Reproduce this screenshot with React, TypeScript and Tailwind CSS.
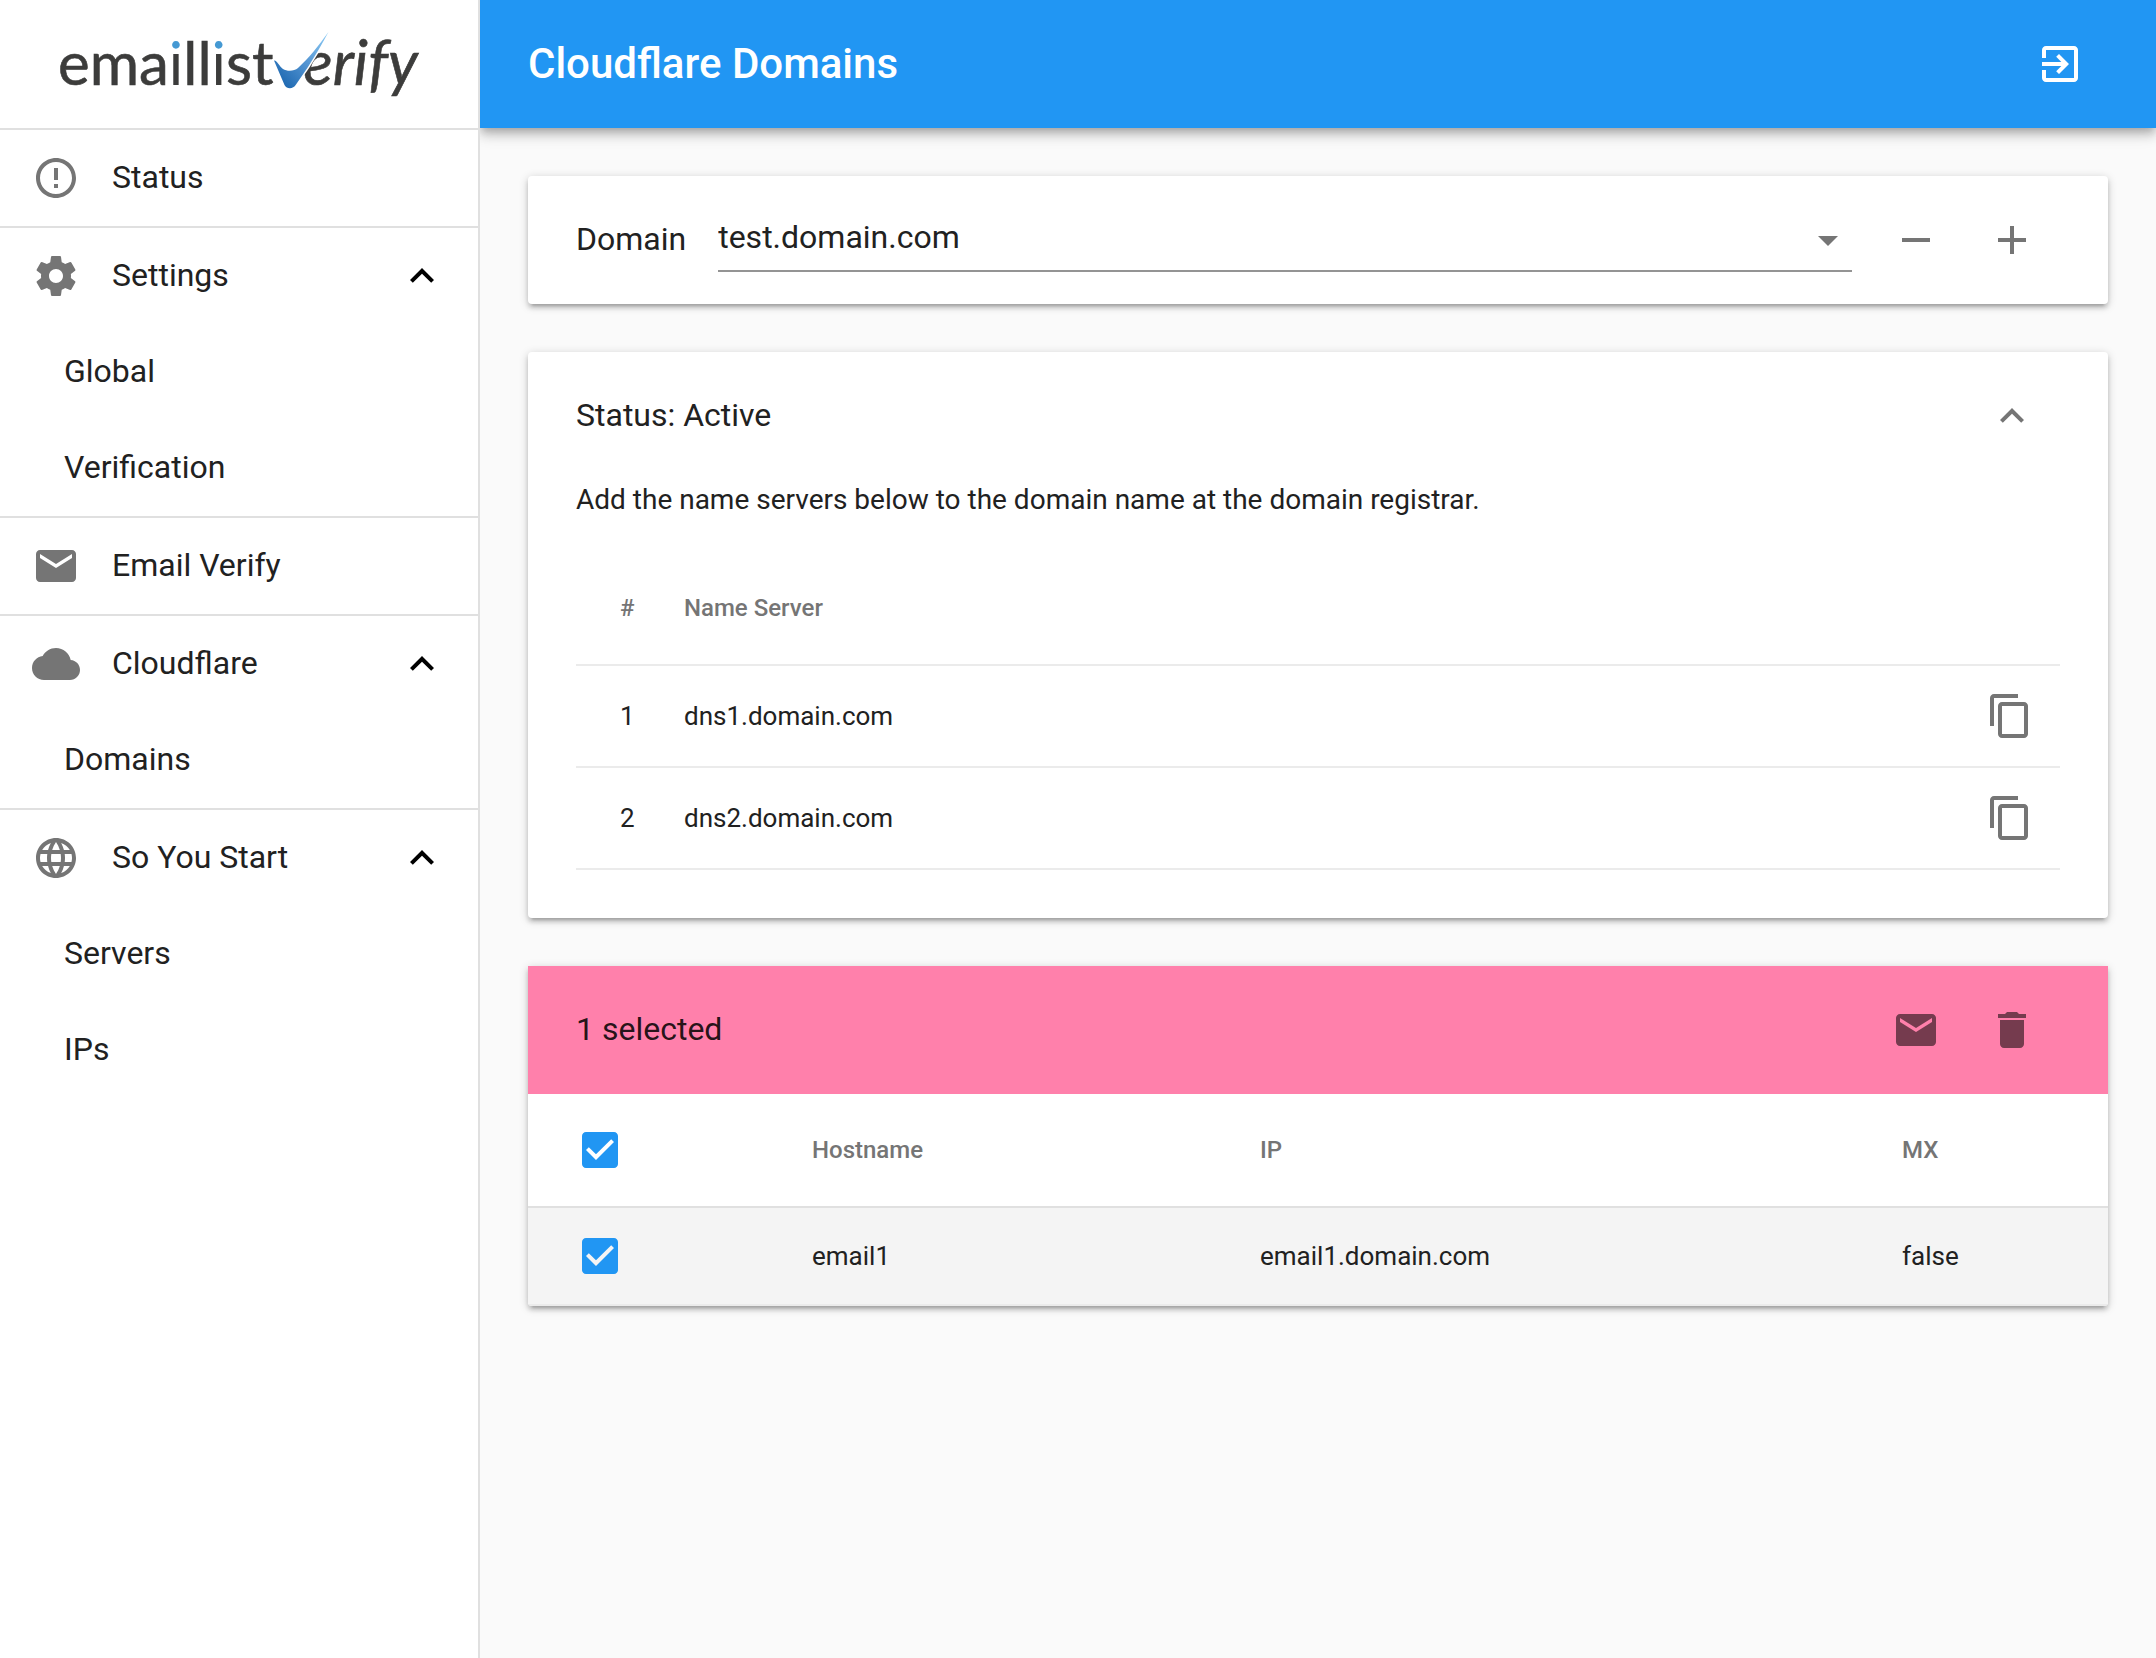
import { useState, type ReactNode } from 'react';

const ICONS = {
  error:
    'M11 15h2v2h-2zm0-8h2v6h-2zm.99-5C6.47 2 2 6.48 2 12s4.47 10 9.99 10C17.52 22 22 17.52 22 12S17.52 2 11.99 2zM12 20c-4.42 0-8-3.58-8-8s3.58-8 8-8 8 3.58 8 8-3.58 8-8 8z',
  settings:
    'M19.43 12.98c.04-.32.07-.64.07-.98s-.03-.66-.07-.98l2.11-1.65c.19-.15.24-.42.12-.64l-2-3.46c-.12-.22-.39-.3-.61-.22l-2.49 1c-.52-.4-1.08-.73-1.69-.98l-.38-2.65C14.46 2.18 14.25 2 14 2h-4c-.25 0-.46.18-.49.42l-.38 2.65c-.61.25-1.17.59-1.69.98l-2.49-1c-.23-.09-.49 0-.61.22l-2 3.46c-.13.22-.07.49.12.64l2.11 1.65c-.04.32-.07.65-.07.98s.03.66.07.98l-2.11 1.65c-.19.15-.24.42-.12.64l2 3.46c.12.22.39.3.61.22l2.49-1c.52.4 1.08.73 1.69.98l.38 2.65c.03.24.24.42.49.42h4c.25 0 .46-.18.49-.42l.38-2.65c.61-.25 1.17-.59 1.69-.98l2.49 1c.23.09.49 0 .61-.22l2-3.46c.12-.22.07-.49-.12-.64l-2.11-1.65zM12 15.5c-1.93 0-3.5-1.57-3.5-3.5s1.57-3.5 3.5-3.5 3.5 1.57 3.5 3.5-1.57 3.5-3.5 3.5z',
  mail: 'M20 4H4c-1.1 0-1.99.9-1.99 2L2 18c0 1.1.9 2 2 2h16c1.1 0 2-.9 2-2V6c0-1.1-.9-2-2-2zm0 4l-8 5-8-5V6l8 5 8-5v2z',
  cloud:
    'M19.35 10.04C18.67 6.59 15.64 4 12 4 9.11 4 6.6 5.64 5.35 8.04 2.34 8.36 0 10.91 0 14c0 3.31 2.69 6 6 6h13c2.76 0 5-2.24 5-5 0-2.64-2.05-4.78-4.65-4.96z',
  globe:
    'M11.99 2C6.47 2 2 6.48 2 12s4.47 10 9.99 10C17.52 22 22 17.52 22 12S17.52 2 11.99 2zm6.93 6h-2.95c-.32-1.25-.78-2.45-1.38-3.56 1.84.63 3.37 1.91 4.33 3.56zM12 4.04c.83 1.2 1.48 2.53 1.91 3.96h-3.82c.43-1.43 1.08-2.76 1.91-3.96zM4.26 14C4.1 13.36 4 12.69 4 12s.1-1.36.26-2h3.38c-.08.66-.14 1.32-.14 2 0 .68.06 1.34.14 2H4.26zm.82 2h2.95c.32 1.25.78 2.45 1.38 3.56-1.84-.63-3.37-1.9-4.33-3.56zm2.95-8H5.08c.96-1.66 2.49-2.93 4.33-3.56C8.81 5.55 8.35 6.75 8.03 8zM12 19.96c-.83-1.2-1.48-2.53-1.91-3.96h3.82c-.43 1.43-1.08 2.76-1.91 3.96zM14.34 14H9.66c-.09-.66-.16-1.32-.16-2 0-.68.07-1.35.16-2h4.68c.09.65.16 1.32.16 2 0 .68-.07 1.34-.16 2zm.25 5.56c.6-1.11 1.06-2.31 1.38-3.56h2.95c-.96 1.65-2.49 2.93-4.33 3.56zM16.36 14c.08-.66.14-1.32.14-2 0-.68-.06-1.34-.14-2h3.38c.16.64.26 1.31.26 2s-.1 1.36-.26 2h-3.38z',
  less: 'M12 8l-6 6 1.41 1.41L12 10.83l4.59 4.58L18 14z',
  exit: 'M10.09 15.59L11.5 17l5-5-5-5-1.41 1.41L12.67 11H3v2h9.67l-2.58 2.59zM19 3H5c-1.11 0-2 .9-2 2v4h2V5h14v14H5v-4H3v4c0 1.1.89 2 2 2h14c1.1 0 2-.9 2-2V5c0-1.1-.9-2-2-2z',
  down: 'M7 10l5 5 5-5z',
  minus: 'M19 13H5v-2h14v2z',
  plus: 'M19 13h-6v6h-2v-6H5v-2h6V5h2v6h6v2z',
  copy: 'M16 1H4c-1.1 0-2 .9-2 2v14h2V3h12V1zm3 4H8c-1.1 0-2 .9-2 2v14c0 1.1.9 2 2 2h11c1.1 0 2-.9 2-2V7c0-1.1-.9-2-2-2zm0 16H8V7h11v14z',
  trash: 'M6 19c0 1.1.9 2 2 2h8c1.1 0 2-.9 2-2V7H6v12zM19 4h-3.5l-1-1h-5l-1 1H5v2h14V4z',
  checked:
    'M19 3H5c-1.11 0-2 .9-2 2v14c0 1.1.89 2 2 2h14c1.11 0 2-.9 2-2V5c0-1.1-.89-2-2-2zm-9 14l-5-5 1.41-1.41L10 14.17l7.59-7.59L19 8l-9 9z',
  unchecked:
    'M19 5v14H5V5h14m0-2H5c-1.1 0-2 .9-2 2v14c0 1.1.9 2 2 2h14c1.1 0 2-.9 2-2V5c0-1.1-.9-2-2-2z',
};

type IconName = keyof typeof ICONS;

function Icon({ name, className = '' }: { name: IconName; className?: string }) {
  return (
    <svg viewBox="0 0 24 24" className={`size-12 shrink-0 fill-current ${className}`} aria-hidden="true">
      <path d={ICONS[name]} />
    </svg>
  );
}

function IconButton({ name, label, className = '' }: { name: IconName; label: string; className?: string }) {
  return (
    <button
      type="button"
      aria-label={label}
      className={`flex size-24 shrink-0 items-center justify-center rounded-full ${className}`}
    >
      <Icon name={name} />
    </button>
  );
}

function Logo() {
  return (
    <svg viewBox="0 0 478 128" className="w-full" role="img" aria-label="emaillistverify">
      <defs>
        <linearGradient id="tick" gradientUnits="userSpaceOnUse" x1="278" y1="82" x2="328" y2="34">
          <stop offset="0" stopColor="#1c67b0" />
          <stop offset="0.5" stopColor="#5596d3" />
          <stop offset="1" stopColor="#8ccbf5" />
        </linearGradient>
        {/* Blue dot above a dark stem for the letter i */}
        <linearGradient id="dotted" gradientUnits="userSpaceOnUse" x1="0" y1="0" x2="0" y2="100">
          <stop offset="0.51" stopColor="#4599d3" />
          <stop offset="0.51" stopColor="#3c3c3b" />
        </linearGradient>
      </defs>
      <g fill="#3c3c3b" stroke="#3c3c3b" strokeWidth="0.6" fontFamily="Lato, sans-serif">
        <text x="58" y="85" fontSize="60">
          ema
          <tspan fill="url(#dotted)" stroke="none">i</tspan>
          ll
          <tspan fill="url(#dotted)" stroke="none">i</tspan>
          st
        </text>
        <text x="303" y="85" fontSize="62" fontStyle="italic">
          erify
        </text>
      </g>
      <path
        d="M274 60.500C277 60 279 66 283 69C287 71.500 294 71.500 298 68C309 58 319 45 328.500 32C322 44 315 56 308 67L296 84.500C293 89.500 287 89.500 284.500 85Z"
        fill="url(#tick)"
        stroke="#fff"
        strokeWidth="3"
        paintOrder="stroke"
      />
    </svg>
  );
}

function NavGroup({ icon, label, items }: { icon: IconName; label: string; items?: string[] }) {
  const [open, setOpen] = useState(true);
  const row = 'flex h-24 w-full items-center gap-8 px-8 text-left';
  return (
    <li className="border-t-2 border-[#e0e0e0]">
      {items ? (
        <button type="button" aria-expanded={open} onClick={() => setOpen(!open)} className={row}>
          <Icon name={icon} className="text-[#757575]" />
          <span className="grow pb-0.5">{label}</span>
          <Icon name="less" className={open ? 'text-black' : 'rotate-180 text-black'} />
        </button>
      ) : (
        <a href="#" className={row}>
          <Icon name={icon} className="text-[#757575]" />
          <span className="grow pb-0.5">{label}</span>
        </a>
      )}
      {items && open && (
        <ul>
          {items.map((item) => (
            <li key={item}>
              <a href="#" className="flex h-24 items-center px-16 pb-0.5">
                {item}
              </a>
            </li>
          ))}
        </ul>
      )}
    </li>
  );
}

function Card({ children, className = 'rounded' }: { children: ReactNode; className?: string }) {
  return (
    <section
      className={`bg-white shadow-[0_2px_10px_0_rgba(0,0,0,0.2),0_4px_4px_0_rgba(0,0,0,0.14),0_6px_2px_-4px_rgba(0,0,0,0.12)] ${className}`}
    >
      {children}
    </section>
  );
}

function Checkbox({ label }: { label: string }) {
  const [checked, setChecked] = useState(true);
  return (
    <label className="grid size-12 cursor-pointer text-[#2196f3]">
      <input
        type="checkbox"
        aria-label={label}
        checked={checked}
        onChange={() => setChecked(!checked)}
        className="col-start-1 row-start-1 size-12 appearance-none"
      />
      <Icon name={checked ? 'checked' : 'unchecked'} className="pointer-events-none col-start-1 row-start-1" />
    </label>
  );
}

export default function App() {
  return (
    <div className="flex min-h-screen bg-[#fafafa] font-[Roboto,sans-serif] text-[32px] leading-[48px] text-[#212121]">
      <aside className="z-10 w-[480px] shrink-0 border-r-2 border-[#e0e0e0] bg-white">
        <a href="#" className="block">
          <Logo />
        </a>
        <nav>
          <ul>
            <NavGroup icon="error" label="Status" />
            <NavGroup icon="settings" label="Settings" items={['Global', 'Verification']} />
            <NavGroup icon="mail" label="Email Verify" />
            <NavGroup icon="cloud" label="Cloudflare" items={['Domains']} />
            <NavGroup icon="globe" label="So You Start" items={['Servers', 'IPs']} />
          </ul>
        </nav>
      </aside>

      <div className="min-w-0 grow">
        <header className="flex h-32 items-center justify-between bg-[#2196f3] px-12 text-white shadow-[0_4px_8px_-2px_rgba(0,0,0,0.2),0_8px_10px_0_rgba(0,0,0,0.14),0_2px_20px_0_rgba(0,0,0,0.12)]">
          <h1 className="text-[42px] font-medium">Cloudflare Domains</h1>
          <IconButton name="exit" label="Sign out" />
        </header>

        <main className="flex flex-col gap-12 p-12">
          <Card>
            <div className="flex h-32 items-center px-12 text-[#757575]">
              <label htmlFor="domain" className="mr-8 pb-0.5 text-[#212121]">
                Domain
              </label>
              <div className="mr-4 grid grow items-center">
                <select
                  id="domain"
                  className="col-start-1 row-start-1 h-16 w-full appearance-none border-b-2 border-[#949494] bg-transparent pb-1 text-[#212121] outline-none"
                >
                  <option>test.domain.com</option>
                </select>
                <Icon name="down" className="pointer-events-none col-start-1 row-start-1 justify-self-end" />
              </div>
              <IconButton name="minus" label="Remove domain" />
              <IconButton name="plus" label="Add domain" />
            </div>
          </Card>

          <Card>
            <div className="flex h-32 items-center justify-between px-12">
              <h2 className="pb-0.5">Status: Active</h2>
              <IconButton name="less" label="Collapse" className="text-[#757575]" />
            </div>
            <div className="px-12 pb-12">
              <p className="mb-8 text-[28px] leading-[40px]">
                Add the name servers below to the domain name at the domain registrar.
              </p>
              <table className="w-full table-fixed border-separate border-spacing-0 text-left text-[26px]">
                <colgroup>
                  <col className="w-[108px]" />
                  <col />
                  <col className="w-[98px]" />
                </colgroup>
                <thead className="text-2xl text-[#757575]">
                  <tr>
                    <th className="h-[114px] border-b-2 border-[#ebebeb] pl-11 font-medium">#</th>
                    <th className="border-b-2 border-[#ebebeb] font-medium">Name Server</th>
                    <td className="border-b-2 border-[#ebebeb]" />
                  </tr>
                </thead>
                <tbody>
                  {['dns1.domain.com', 'dns2.domain.com'].map((server, i) => (
                    <tr key={server}>
                      <td className="h-[102px] border-b-2 border-[#ebebeb] pl-11">{i + 1}</td>
                      <td className="border-b-2 border-[#ebebeb]">{server}</td>
                      <td className="border-b-2 border-[#ebebeb]">
                        <IconButton name="copy" label={`Copy ${server}`} className="text-[#757575]" />
                      </td>
                    </tr>
                  ))}
                </tbody>
              </table>
            </div>
          </Card>

          <Card className="overflow-hidden rounded-b">
            <div className="flex h-32 items-center bg-[#ff80ab] px-12 text-black/87">
              <h2 className="grow pb-0.5">1 selected</h2>
              <IconButton name="mail" label="Send mail" className="text-black/54" />
              <IconButton name="trash" label="Delete" className="text-black/54" />
            </div>
            <table className="w-full table-fixed border-separate border-spacing-0 text-left text-[26px]">
              <colgroup>
                <col className="w-[284px]" />
                <col className="w-[448px]" />
                <col />
                <col className="w-[206px]" />
              </colgroup>
              <thead className="text-2xl text-[#757575]">
                <tr>
                  <td className="h-[114px] border-b-2 border-[#e0e0e0] pl-12">
                    <Checkbox label="Select all hosts" />
                  </td>
                  <th className="border-b-2 border-[#e0e0e0] font-medium">Hostname</th>
                  <th className="border-b-2 border-[#e0e0e0] font-medium">IP</th>
                  <th className="border-b-2 border-[#e0e0e0] font-medium">MX</th>
                </tr>
              </thead>
              <tbody className="bg-[#f4f4f4]">
                <tr>
                  <td className="h-[98px] border-b-2 border-[#ebebeb] pl-12">
                    <Checkbox label="Select email1" />
                  </td>
                  <td className="border-b-2 border-[#ebebeb]">email1</td>
                  <td className="border-b-2 border-[#ebebeb]">email1.domain.com</td>
                  <td className="border-b-2 border-[#ebebeb]">false</td>
                </tr>
              </tbody>
            </table>
          </Card>
        </main>
      </div>
    </div>
  );
}
